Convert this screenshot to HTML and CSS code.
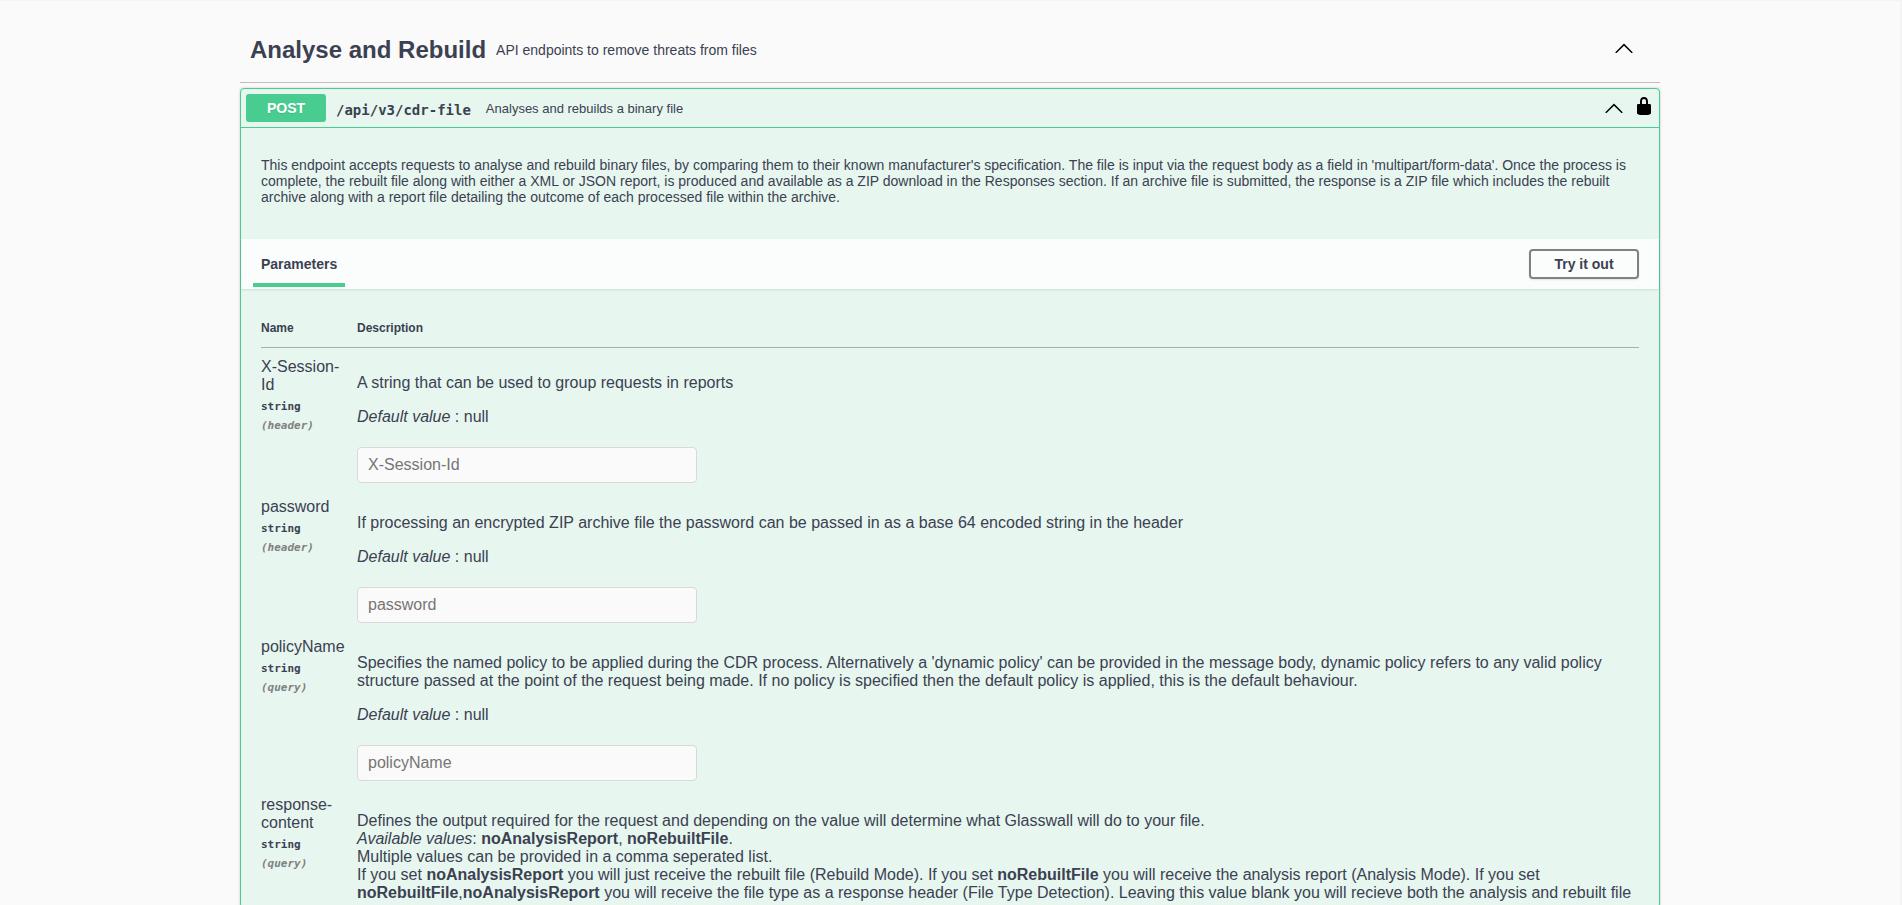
FILE: index.html
```html
<!DOCTYPE html>
<html lang="en">
<head>
    <meta charset="UTF-8">
    <meta name="viewport" content="width=device-width, initial-scale=1.0">
    <title>API documentation</title>
    <link rel="stylesheet" href="styles.css">
</head>
<body>
    <main class="wrapper">
        <header class="tag">
            <h3 class="tag-name">Analyse and Rebuild</h3>
            <p class="tag-info">API endpoints to remove threats from files</p>
            <button class="icon-btn tag-toggle" aria-label="Collapse section">
                <svg class="arrow" viewBox="0 0 20 20"><path d="M17.418 14.908c.272.281.701.281.979 0s.271-.736 0-1.014l-7.908-7.83c-.27-.281-.701-.281-.979 0l-7.908 7.83c-.272.278-.272.733 0 1.014s.701.281.979 0L10 7.767l7.418 7.141z"/></svg>
            </button>
        </header>

        <section class="opblock">
            <div class="summary">
                <span class="method">POST</span>
                <span class="path">/api/v3/cdr-file</span>
                <span class="summary-text">Analyses and rebuilds a binary file</span>
                <button class="icon-btn" aria-label="Collapse operation">
                    <svg class="arrow" viewBox="0 0 20 20"><path d="M17.418 14.908c.272.281.701.281.979 0s.271-.736 0-1.014l-7.908-7.83c-.27-.281-.701-.281-.979 0l-7.908 7.83c-.272.278-.272.733 0 1.014s.701.281.979 0L10 7.767l7.418 7.141z"/></svg>
                </button>
                <button class="icon-btn lock-btn" aria-label="Authorize">
                    <svg class="lock" viewBox="0 0 20 20"><path d="M15.8 8H14V5.6C14 2.703 12.665 1 10 1 7.334 1 6 2.703 6 5.6V8H4c-.553 0-1 .646-1 1.199V17c0 .549.428 1.139.951 1.307l1.197.387C5.672 18.861 6.55 19 7.1 19h5.8c.549 0 1.428-.139 1.951-.307l1.196-.387c.524-.167.953-.757.953-1.306V9.199C17 8.646 16.352 8 15.8 8zM12 8H8V5.199C8 3.754 8.797 3 10 3c1.203 0 2 .754 2 2.199V8z"/></svg>
                </button>
            </div>

            <p class="description">This endpoint accepts requests to analyse and rebuild binary files, by comparing them to their known manufacturer's specification. The file is input via the request body as a field in 'multipart/form-data'. Once the process is complete, the rebuilt file along with either a XML or JSON report, is produced and available as a ZIP download in the Responses section. If an archive file is submitted, the response is a ZIP file which includes the rebuilt archive along with a report file detailing the outcome of each processed file within the archive.</p>

            <div class="section-header">
                <h4 class="tab">Parameters</h4>
                <button class="try-btn">Try it out</button>
            </div>

            <table class="parameters">
                <thead>
                    <tr>
                        <th class="col-name">Name</th>
                        <th>Description</th>
                    </tr>
                </thead>
                <tbody>
                    <tr>
                        <td class="col-name">
                            <label class="param-name" for="session">X-Session-Id</label>
                            <div class="param-type">string</div>
                            <div class="param-in">(header)</div>
                        </td>
                        <td>
                            <p>A string that can be used to group requests in reports</p>
                            <p><i>Default value</i> : null</p>
                            <input type="text" id="session" placeholder="X-Session-Id">
                        </td>
                    </tr>
                    <tr>
                        <td class="col-name">
                            <label class="param-name" for="password">password</label>
                            <div class="param-type">string</div>
                            <div class="param-in">(header)</div>
                        </td>
                        <td>
                            <p>If processing an encrypted ZIP archive file the password can be passed in as a base 64 encoded string in the header</p>
                            <p><i>Default value</i> : null</p>
                            <input type="text" id="password" placeholder="password">
                        </td>
                    </tr>
                    <tr>
                        <td class="col-name">
                            <label class="param-name" for="policy">policyName</label>
                            <div class="param-type">string</div>
                            <div class="param-in">(query)</div>
                        </td>
                        <td>
                            <p>Specifies the named policy to be applied during the CDR process. Alternatively a 'dynamic policy' can be provided in the message body, dynamic policy refers to any valid policy structure passed at the point of the request being made. If no policy is specified then the default policy is applied, this is the default behaviour.</p>
                            <p><i>Default value</i> : null</p>
                            <input type="text" id="policy" placeholder="policyName">
                        </td>
                    </tr>
                    <tr>
                        <td class="col-name">
                            <div class="param-name">response-content</div>
                            <div class="param-type">string</div>
                            <div class="param-in">(query)</div>
                        </td>
                        <td>
                            <p>Defines the output required for the request and depending on the value will determine what Glasswall will do to your file.<br>
                            <i>Available values</i>: <b>noAnalysisReport</b>, <b>noRebuiltFile</b>.<br>
                            Multiple values can be provided in a comma seperated list.<br>
                            If you set <b>noAnalysisReport</b> you will just receive the rebuilt file (Rebuild Mode). If you set <b>noRebuiltFile</b> you will receive the analysis report (Analysis Mode). If you set <b>noRebuiltFile</b>,<b>noAnalysisReport</b> you will receive the file type as a response header (File Type Detection). Leaving this value blank you will recieve both the analysis and rebuilt file</p>
                        </td>
                    </tr>
                </tbody>
            </table>
        </section>
    </main>
</body>
</html>
```

FILE: styles.css
```css
*{
    box-sizing: border-box;
}
html{
    background: #fafafa;
}
body{
    margin: 0px;
    height: 100vh;
    overflow: hidden;
    border-top: 1px solid #f4f4f4;
    border-right: 2px solid #f4f4f4;
    font-family: "Liberation Sans", Arial, sans-serif;
    color: #3b4151;
}
h3, h4, p{
    margin: 0px;
}
.wrapper{
    max-width: 1460px;
    margin: 0px auto;
    padding: 16px 20px 0px;
}
.icon-btn{
    display: flex;
    padding: 0px;
    border: none;
    background: none;
    cursor: pointer;
}
.arrow{
    width: 20px;
    height: 20px;
}
.lock{
    width: 20px;
    height: 20px;
}

/* tag heading */
.tag{
    display: flex;
    align-items: center;
    height: 66px;
    padding: 0px 26px 0px 10px;
    border-bottom: 1px solid #bfbfc1;
}
.tag-name{
    font-size: 24px;
}
.tag-info{
    flex: 1;
    padding: 0px 10px;
    font-size: 14px;
}
.tag-toggle{
    margin-bottom: 3px;
}

/* operation */
.opblock{
    margin-top: 5px;
    border: 1px solid #49cc90;
    border-radius: 4px;
    background: #e7f6ef;
    box-shadow: 0 0 3px rgba(0, 0, 0, .19);
}
.summary{
    display: flex;
    align-items: center;
    padding: 5px;
    border-bottom: 1px solid #49cc90;
}
.method{
    width: 80px;
    border-radius: 3px;
    background: #49cc90;
    color: white;
    font-size: 14px;
    font-weight: bold;
    line-height: 28px;
    text-align: center;
    text-shadow: 0 1px 0 rgba(0, 0, 0, .1);
}
.path{
    padding: 3px 15px 0px 10px;
    font-family: "DejaVu Sans Mono", monospace;
    font-size: 14px;
    font-weight: bold;
}
.summary-text{
    flex: 1;
    font-size: 13px;
}
.lock-btn{
    margin: 0px 0px 4px 10px;
}
.description{
    padding: 29px 20px 34px;
    font-size: 14px;
    line-height: 16px;
}
.section-header{
    display: flex;
    align-items: center;
    justify-content: space-between;
    height: 50px;
    padding: 0px 20px 0px 12px;
    background: rgba(255, 255, 255, .8);
    box-shadow: 0 1px 2px rgba(0, 0, 0, .1);
}
.tab{
    align-self: flex-end;
    margin-bottom: 2px;
    padding: 0px 8px;
    border-bottom: 4px solid #49cc90;
    font-size: 14px;
    line-height: 38px;
}
.try-btn{
    width: 110px;
    height: 30px;
    border: 2px solid gray;
    border-radius: 4px;
    background: transparent;
    box-shadow: 0 1px 2px rgba(0, 0, 0, .1);
    color: #3b4151;
    font-family: inherit;
    font-size: 14px;
    font-weight: bold;
    cursor: pointer;
}

/* parameters */
.parameters{
    width: calc(100% - 40px);
    margin: 20px 20px 0px;
    border-collapse: collapse;
    font-size: 16px;
    line-height: 18px;
}
.parameters th{
    height: 38px;
    padding: 0px;
    border-bottom: 1px solid #a3b3ad;
    font-size: 12px;
    text-align: left;
}
.parameters td{
    padding: 10px 0px 5px;
    vertical-align: top;
}
.parameters .col-name{
    width: 96px;
    padding-right: 10px;
}
.parameters p{
    margin: 16px 0px 0px;
}
.param-name{
    display: block;
}
.param-type, .param-in{
    font-family: "DejaVu Sans Mono", monospace;
    font-size: 11px;
    font-weight: bold;
    line-height: 19px;
}
.param-type{
    padding-top: 3px;
}
.param-in{
    color: gray;
    font-style: italic;
}
.parameters input{
    display: block;
    width: 340px;
    height: 36px;
    margin-top: 21px;
    padding: 0px 10px;
    border: 1px solid #d9d9d9;
    border-radius: 4px;
    background: #fafafa;
    font-family: inherit;
    font-size: 16px;
}
```
